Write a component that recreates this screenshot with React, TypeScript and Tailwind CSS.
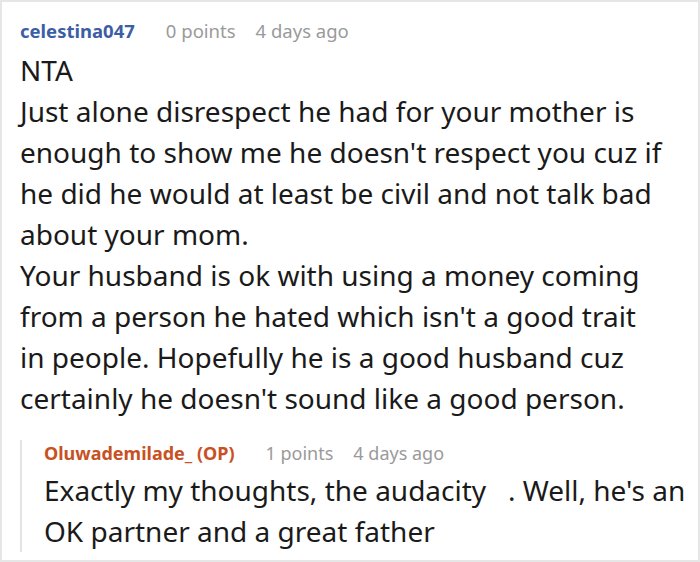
const body = { fontFamily: '"Noto Sans", "Open Sans", sans-serif' };

const Meta = ({ points, when }: { points: string; when: string }) => (
  <>
    <span className="ml-[31px] text-[#9a9a9a]">{points}</span>
    <span className="ml-[20px] text-[#9a9a9a]">{when}</span>
  </>
);

export default function App() {
  return (
    <div
      className="h-[562px] w-[700px] overflow-hidden border-2 border-[#e6e6e6] bg-white text-[#1a1a1a]"
      style={body}
    >
      <div className="pl-[18px] pt-[16px]">
        <div className="flex items-baseline text-[18.5px] leading-[26px]">
          <span className="font-bold text-[#3c5ea5]">celestina047</span>
          <Meta points="0 points" when="4 days ago" />
        </div>

        <p className="mt-[6px] text-[28px] leading-[41px]">
          NTA
          <br />
          Just alone disrespect he had for your mother is
          <br />
          enough to show me he doesn't respect you cuz if
          <br />
          he did he would at least be civil and not talk bad
          <br />
          about your mom.
          <br />
          Your husband is ok with using a money coming
          <br />
          from a person he hated which isn't a good trait
          <br />
          in people. Hopefully he is a good husband cuz
          <br />
          certainly he doesn't sound like a good person.
        </p>

        <div className="mt-[21px] border-l-2 border-[#e4e4e4] pl-[22px]">
          <div className="flex items-baseline text-[18px] leading-[26px]">
            <span className="font-bold text-[#c8511f]">Oluwademilade_ (OP)</span>
            <Meta points="1 points" when="4 days ago" />
          </div>
          <p className="mt-[4px] mb-[-7px] whitespace-pre text-[28px] leading-[41px]">
            {"Exactly my thoughts, the audacity   . Well, he's an"}
            <br />
            OK partner and a great father
          </p>
        </div>
      </div>
    </div>
  );
}
